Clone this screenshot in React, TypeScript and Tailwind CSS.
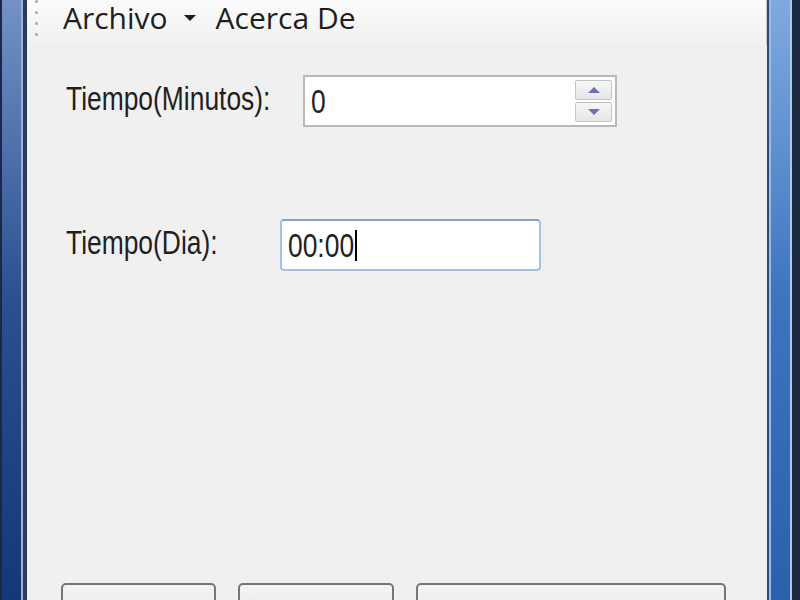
import React from "react";

const labelFont = { fontFamily: '"Liberation Sans", Arial, sans-serif' };
const menuFont = { fontFamily: '"Open Sans", "Noto Sans", sans-serif' };

const LeftFrame = () => (
  <div className="flex h-full w-[27px] shrink-0">
    <div className="w-[2px] bg-[#1b2947]" />
    <div className="w-[19px] bg-linear-to-b from-[#7391c4] via-[#2c4f92] to-[#163777]" />
    <div className="w-[2px] bg-[#9db1d6]" />
    <div className="w-[4px] bg-[#2b3b5c]" />
  </div>
);

const RightFrame = () => (
  <div className="flex h-full w-[33px] shrink-0">
    <div className="w-[2px] bg-[#2f4b72]" />
    <div className="w-[2px] bg-[#9dbbe2]" />
    <div className="w-[19px] bg-linear-to-b from-[#80aade] via-[#3d74c0] to-[#2a60ad]" />
    <div className="w-[2px] bg-[#a9c8ee]" />
    <div className="w-[8px] bg-[#1c2b42]" />
  </div>
);

const MenuBar = () => (
  <div className="relative flex h-[45px] shrink-0 items-start bg-linear-to-b from-[#fbfbfb] to-[#f1f1f1] pt-[2px] text-[#1e1e1e]">
    {/* grip */}
    <div className="absolute left-[8px] top-0 flex flex-col gap-[8px]">
      {[0, 1, 2, 3].map((i) => (
        <span key={i} className="h-[3px] w-[3px] rounded-full bg-[#a8a8a8]" />
      ))}
    </div>
    <div className="absolute right-0 top-0 h-[45px] w-px bg-[#c8c8c8]" />
    <div className="flex items-center pl-[36px] text-[30px] leading-[32px]" style={menuFont}>
      <span>Archivo</span>
      <svg className="ml-[15px] mr-[19px]" width="14" height="8" viewBox="0 0 14 8">
        <path d="M1 1 L13 1 L7 7 Z" fill="#1e1e1e" />
      </svg>
      <span>Acerca De</span>
    </div>
  </div>
);

const SpinButton = ({ up }: { up?: boolean }) => (
  <div className="flex h-[20px] w-[37px] items-center justify-center rounded-[2px] border border-[#c4c4c4] bg-linear-to-b from-[#f7f7f7] to-[#e6e6e6]">
    <svg width="14" height="8" viewBox="0 0 14 8">
      <path d={up ? "M1 7 L13 7 L7 1 Z" : "M1 1 L13 1 L7 7 Z"} fill="#6b70b2" />
    </svg>
  </div>
);

const BigText = ({ children }: { children: React.ReactNode }) => (
  <span
    className="inline-block origin-left scale-x-[0.8] whitespace-nowrap text-[33px] leading-none text-[#1f1f1f]"
    style={labelFont}
  >
    {children}
  </span>
);

export default function App() {
  return (
    <div className="flex h-[600px] w-[800px] overflow-hidden bg-[#f0f0f0]">
      <LeftFrame />
      <div className="flex min-w-0 flex-1 flex-col">
        <MenuBar />
        <div className="flex flex-1 flex-col">
          {/* Tiempo(Minutos) */}
          <div className="mt-[30px] flex items-center pl-[39px]">
            <div className="w-[237px] pb-[4px]">
              <BigText>Tiempo(Minutos):</BigText>
            </div>
            <div className="flex h-[52px] w-[314px] items-center justify-between border-2 border-[#b9b9b9] bg-white pl-[6px] pr-[3px]">
              <BigText>0</BigText>
              <div className="flex flex-col gap-[2px]">
                <SpinButton up />
                <SpinButton />
              </div>
            </div>
          </div>

          {/* Tiempo(Dia) */}
          <div className="mt-[92px] flex items-center pl-[39px]">
            <div className="w-[214px] pb-[4px]">
              <BigText>Tiempo(Dia):</BigText>
            </div>
            <div className="flex h-[52px] w-[261px] items-center rounded-[4px] border-2 border-[#a4c3e4] border-t-[#7fa4cf] bg-white pl-[6px]">
              <BigText>00:00</BigText>
              <span className="-ml-[16px] h-[31px] w-[2px] bg-black" />
            </div>
          </div>

          {/* buttons */}
          <div className="mt-auto flex h-[17px] gap-[22px] overflow-hidden pl-[34px]">
            {[
              { label: "Aceptar", w: "w-[155px]" },
              { label: "Terminar", w: "w-[156px]" },
              { label: "Cancelar Apagado", w: "w-[310px]" },
            ].map((b) => (
              <div
                key={b.label}
                className={`${b.w} flex h-[50px] shrink-0 items-start justify-center rounded-[5px] border-2 border-[#767676] bg-linear-to-b from-[#f4f4f4] to-[#e4e4e4] pt-[11px]`}
              >
                <span
                  className="inline-block scale-x-[0.8] whitespace-nowrap text-[33px] leading-none text-[#1f1f1f]"
                  style={labelFont}
                >
                  {b.label}
                </span>
              </div>
            ))}
          </div>
        </div>
      </div>
      <RightFrame />
    </div>
  );
}
